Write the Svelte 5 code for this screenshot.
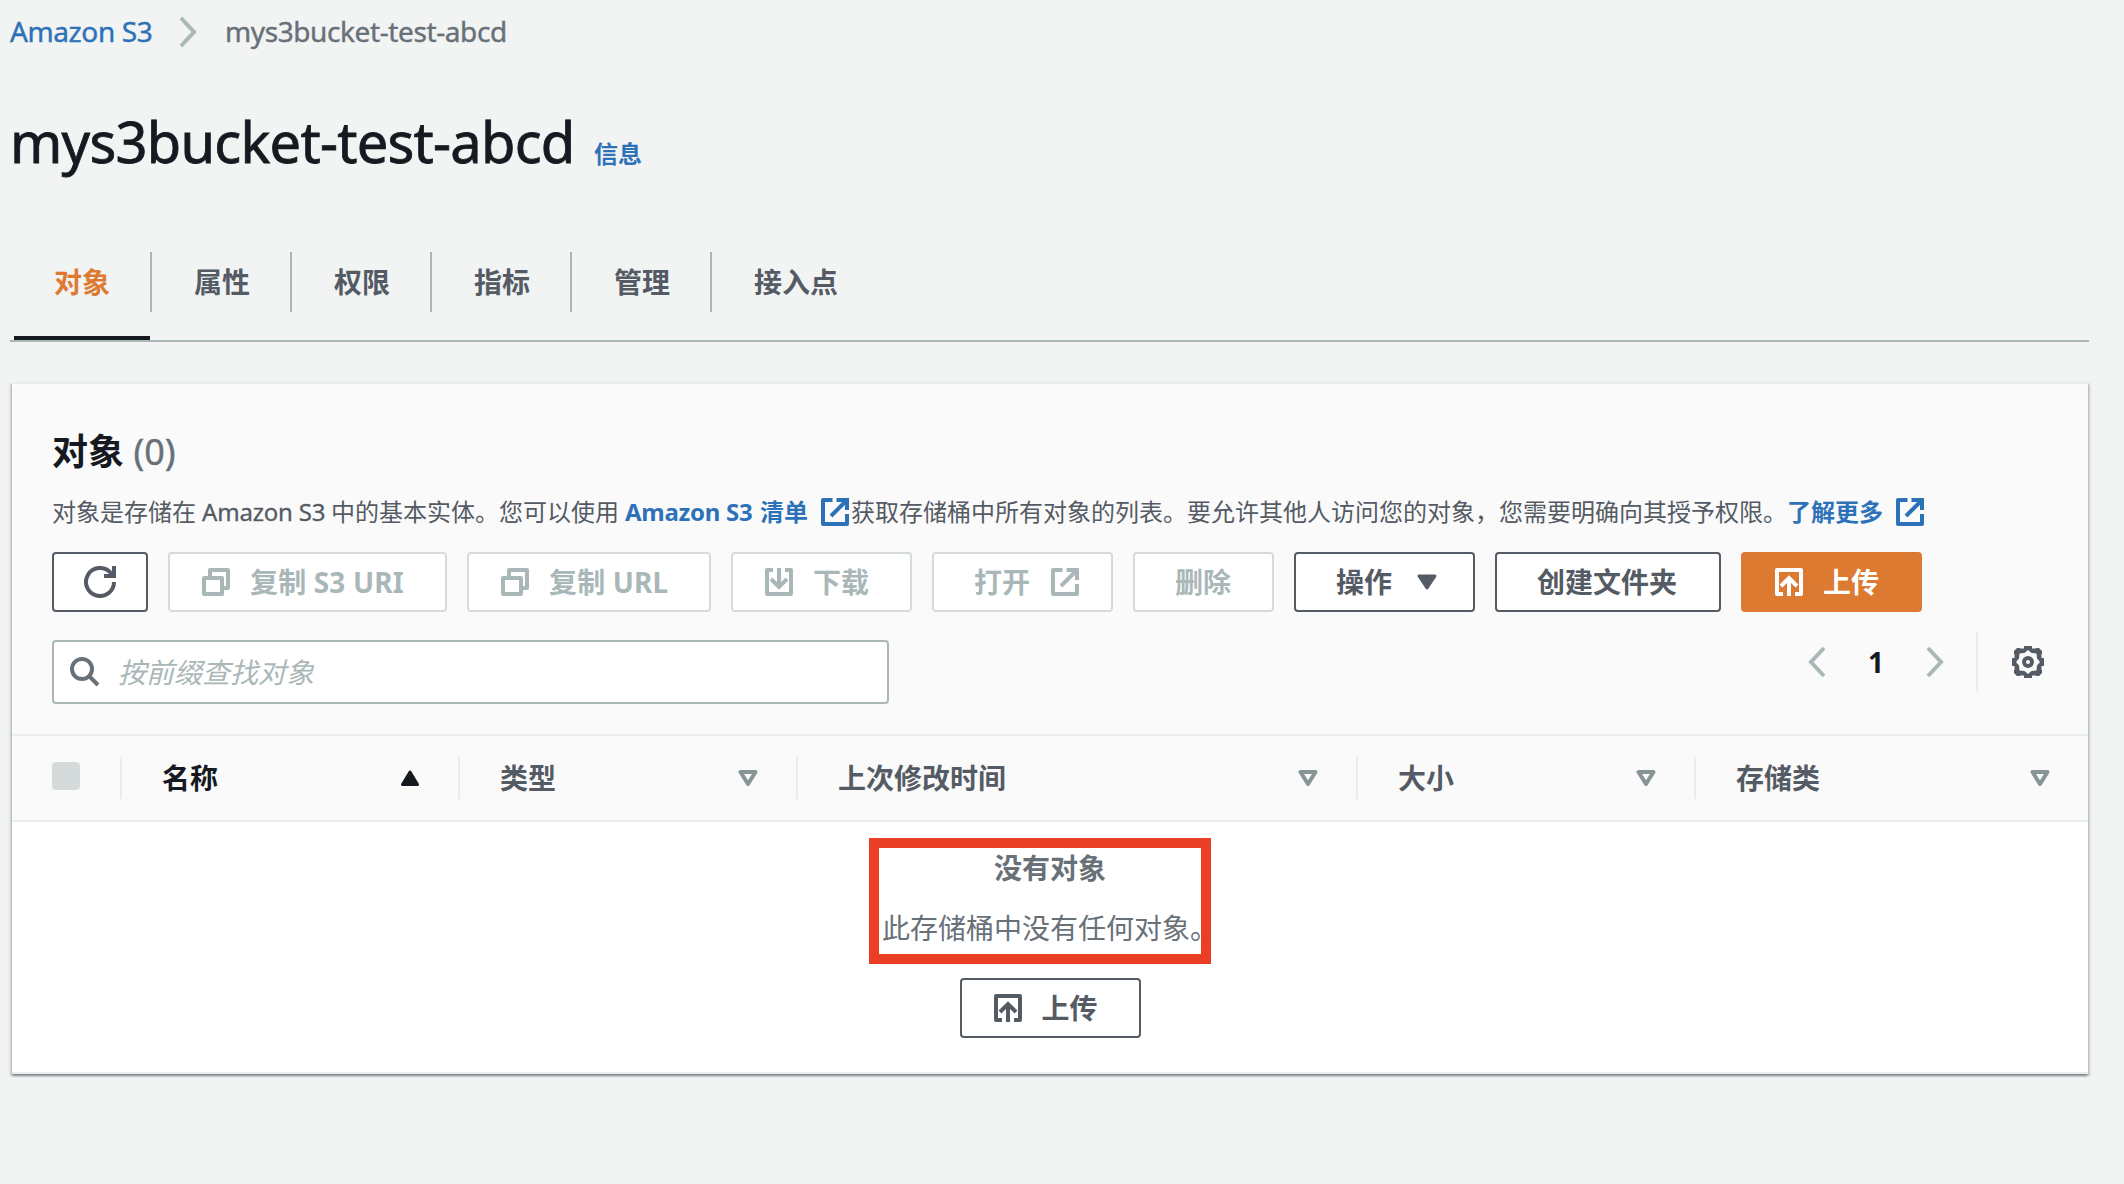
<script>
  const tabs = ['对象', '属性', '权限', '指标', '管理', '接入点'];
  const columns = [
    { label: '名称', cls: 'c1', sorted: true },
    { label: '类型', cls: 'c2' },
    { label: '上次修改时间', cls: 'c3' },
    { label: '大小', cls: 'c4' },
    { label: '存储类', cls: 'c5' }
  ];
</script>

{#snippet icon(name)}
  <svg class="icon" viewBox="0 0 28 28" fill="none" stroke="currentColor" stroke-width="4" stroke-linejoin="round">
    {#if name === 'copy'}
      <path d="M2 10h18v16H2z" />
      <path d="M8 9V2h18v18h-5" />
    {:else if name === 'download'}
      <path d="M8 2H2v24h24V2h-6" />
      <path d="M14 0v18M6 11l8 8 8-8" stroke-linejoin="miter" />
    {:else if name === 'upload'}
      <path d="M8 26H2V2h24v24h-6" />
      <path d="M14 28V10M6 18l8-8 8 8" stroke-linejoin="miter" />
    {:else if name === 'external'}
      <path d="M11.500 2H2v24h24V16" />
      <path d="M10 18L25 3M15.500 2H26v10" stroke-linejoin="miter" />
    {/if}
  </svg>
{/snippet}

<div class="page">
  <nav class="crumbs">
    <a class="root" href="#s3">Amazon S3</a>
    <svg class="chev" viewBox="0 0 20 32" fill="none" stroke="#aab7b8" stroke-width="4"><path d="M2 2l13 14L2 30" /></svg>
    <span class="leaf">mys3bucket-test-abcd</span>
  </nav>

  <header class="title">
    <h1>mys3bucket-test-abcd</h1>
    <a href="#info">信息</a>
  </header>

  <div class="tabs">
    {#each tabs as tab, i}
      <div class="tab" class:active={i === 0}><span>{tab}</span></div>
    {/each}
  </div>

  <section class="panel">
    <div class="head">
      <h2>对象 <span>(0)</span></h2>
      <p class="desc">
        <span>对象是存储在</span><span class="lat">Amazon S3</span><span>中的基本实体。您可以使用</span><a href="#inv"><span class="latb">Amazon S3</span><span>清单</span>{@render icon('external')}</a><span class="more">获取存储桶中所有对象的列表。要允许其他人访问您的对象，您需要明确向其授予权限。</span><a href="#more"><span>了解更多</span>{@render icon('external')}</a>
      </p>

      <div class="actions">
        <button class="w96" aria-label="refresh">
          <svg class="refresh" viewBox="0 0 32 32" fill="none" stroke="currentColor" stroke-width="4">
            <path d="M30 16A14 14 0 1 1 26 6.2L29 10" />
            <path d="M30 0v10H20" />
          </svg>
        </button>
        <button class="w279" disabled>{@render icon('copy')}<span class="wide">复制 S3 URI</span></button>
        <button class="w244" disabled>{@render icon('copy')}<span class="wide">复制 URL</span></button>
        <button class="w181" disabled>{@render icon('download')}<span>下载</span></button>
        <button class="w181 end" disabled><span>打开</span>{@render icon('external')}</button>
        <button class="w141" disabled><span>删除</span></button>
        <button class="w181 ops"><span>操作</span>
          <svg class="tri" viewBox="0 0 20 16"><path d="M2 2h16l-8 12z" fill="currentColor" stroke="currentColor" stroke-width="3" stroke-linejoin="round" /></svg>
        </button>
        <button class="w226"><span>创建文件夹</span></button>
        <button class="w181 primary">{@render icon('upload')}<span>上传</span></button>
      </div>

      <div class="tools">
        <div class="search">
          <svg viewBox="0 0 30 30" fill="none" stroke="#687078" stroke-width="4"><circle cx="12" cy="12" r="10" /><path d="M19 19l9 9" /></svg>
          <em>按前缀查找对象</em>
        </div>
        <div class="pager">
          <svg class="chev" viewBox="0 0 20 32" fill="none" stroke="#aab7b8" stroke-width="4"><path d="M18 2L5 16l13 14" /></svg>
          <b>1</b>
          <svg class="chev" viewBox="0 0 20 32" fill="none" stroke="#aab7b8" stroke-width="4"><path d="M2 2l13 14L2 30" /></svg>
          <i></i>
          <svg class="gear" viewBox="-16 -16 32 32" fill="#545b64" fill-rule="evenodd">
            <path d="M-4-16H4V-13.500H8V-14H11L14-11V-8H13.500V-4H16V4H13.500V8H14V11L11 14H8V13.500H4V16H-4V13.500H-8V14H-11L-14 11V8H-13.500V4H-16V-4H-13.500V-8H-14V-11L-11-14H-8V-13.500H-4Z M0-12L-3.500-9L-8.500-8.500L-9-3.500L-12 0L-9 3.500L-8.500 8.500L-3.500 9L0 12L3.500 9L8.500 8.500L9 3.500L12 0L9-3.500L8.500-8.500L3.500-9Z" />
            <circle r="4" fill="none" stroke="#545b64" stroke-width="4" />
          </svg>
        </div>
      </div>
    </div>

    <div class="thead">
      <div class="check"><span></span></div>
      {#each columns as col}
        <div class="th {col.cls}" class:sorted={col.sorted}>
          <span>{col.label}</span>
          <svg class="tri" viewBox="0 0 20 16">
            {#if col.sorted}
              <path d="M2.5 14.5h15L10 2z" fill="#16191f" stroke="#16191f" stroke-width="3" stroke-linejoin="round" />
            {:else}
              <path d="M2.5 2h15L10 14z" fill="none" stroke="#879596" stroke-width="4" stroke-linejoin="round" />
            {/if}
          </svg>
        </div>
      {/each}
    </div>

    <div class="empty">
      <strong>没有对象</strong>
      <p>此存储桶中没有任何对象。</p>
      <button class="w181">{@render icon('upload')}<span>上传</span></button>
      <div class="mark"></div>
    </div>
  </section>
</div>

<style>
  :global(body) { background: #f2f3f3; }
  * { box-sizing: border-box; }
  .page {
    width: 2124px; height: 1184px; overflow: hidden; padding-left: 10px;
    background: #f2f3f3; color: #545b64;
    font: 28px/40px "Noto Sans", "Noto Sans CJK SC", sans-serif;
  }
  h1, h2, p { margin: 0; font-weight: 400; }
  a { color: #2d72b8; text-decoration: none; }
  svg { display: block; flex: none; }
  .icon { width: 28px; height: 28px; }
  .chev { width: 20px; height: 32px; }

  .crumbs { display: flex; align-items: center; height: 64px; color: #687078; -webkit-text-stroke: 0.4px; }
  .crumbs a, .crumbs span { padding-bottom: 2px; }
  .root { width: 142px; white-space: nowrap; letter-spacing: -0.4px; }
  .crumbs .chev { margin: 0 26px 0 27px; }
  .leaf { letter-spacing: -0.4px; }

  .title { display: flex; align-items: baseline; height: 188px; padding-top: 42px; }
  h1 { width: 584px; font-size: 56px; line-height: 70px; color: #16191f; letter-spacing: -0.75px; white-space: nowrap; -webkit-text-stroke: 0.8px; }
  .title a { font-size: 24px; font-weight: 700; }

  .tabs { display: flex; width: 2079px; height: 90px; border-bottom: 2px solid #aab7b8; font-weight: 700; }
  .tab { width: 140px; height: 60px; display: flex; align-items: center; padding-left: 42px; border-left: 2px solid #aab7b8; white-space: nowrap; }
  .tab:last-child { width: 168px; }
  .tab.active { width: 136px; height: 88px; margin: 0 0 0 4px; padding: 0 0 24px 40px; border-left: 0; border-bottom: 4px solid #16191f; color: #dd7a32; }

  .panel {
    width: 2076px; height: 692px; margin: 40px 0 0 2px; border-top: 2px solid #eaeded; border-bottom: 2px solid #eaeded; background: #fff;
    box-shadow: 0 2px 2px rgba(0,28,36,.3), 2px 2px 2px rgba(0,28,36,.15), -2px 2px 2px rgba(0,28,36,.15);
  }
  .head { height: 350px; padding: 44px 40px 0; background: #fafafa; }
  h2 { height: 48px; font-size: 36px; line-height: 48px; font-weight: 700; color: #16191f; white-space: nowrap; }
  h2 span { font-weight: 400; color: #687078; -webkit-text-stroke: 0.4px; }
  .desc { display: flex; align-items: center; height: 36px; margin-top: 18px; font-size: 24px; line-height: 36px; white-space: nowrap; }
  .desc a { display: flex; align-items: center; font-weight: 700; }
  .desc .icon { margin-left: 13px; }
  .lat { width: 135px; padding-left: 6px; letter-spacing: -0.2px; -webkit-text-stroke: 0.3px; }
  .latb { width: 141px; padding-left: 6px; letter-spacing: -0.3px; }
  .more { margin-left: 2px; }

  .actions { display: flex; gap: 20px; margin-top: 22px; }
  button {
    display: flex; align-items: center; height: 60px; padding: 0 0 0 32px; gap: 20px;
    background: #fff; border: 2px solid #545b64; border-radius: 4px; color: #545b64;
    font: 700 28px/40px "Noto Sans", "Noto Sans CJK SC", sans-serif; white-space: nowrap;
  }
  button:disabled { border-color: #d5dbdb; color: #aab7b8; }
  .w96 { width: 96px; }
  .refresh { width: 32px; height: 32px; margin-left: -2px; }
  .w279 { width: 279px; }
  .w244 { width: 244px; }
  .w181 { width: 181px; }
  .w141 { width: 141px; padding-left: 40px; }
  .w226 { width: 226px; padding-left: 40px; }
  .wide { letter-spacing: 0.15px; }
  .end { padding-left: 40px; gap: 21px; }
  .ops { padding-left: 40px; gap: 25px; }
  .primary { background: #dd7a32; border-color: #dd7a32; color: #fff; }
  .tri { width: 20px; height: 16px; }

  .tools { display: flex; justify-content: space-between; height: 64px; margin-top: 28px; }
  .search { display: flex; align-items: center; width: 837px; height: 64px; padding-left: 16px; gap: 18px; background: #fff; border: 2px solid #aab7b8; border-radius: 4px; }
  .search svg { width: 30px; height: 30px; }
  .search em { color: #aab7b8; }
  .pager { display: flex; align-items: center; height: 60px; margin-top: -8px; }
  .pager b { width: 100px; text-align: center; color: #16191f; }
  .pager i { width: 2px; height: 60px; margin: 0 34px 0 30px; background: #eaeded; }
  .gear { width: 32px; height: 32px; margin-right: 4px; }

  .thead { display: flex; align-items: center; height: 88px; border-top: 2px solid #eaeded; border-bottom: 2px solid #eaeded; background: #fafafa; font-weight: 700; }
  .check { width: 108px; padding-left: 40px; }
  .check span { display: block; width: 28px; height: 28px; margin-bottom: 4px; border-radius: 4px; background: #d5dbdb; }
  .th { display: flex; align-items: center; justify-content: space-between; height: 42px; padding: 0 38px 0 40px; border-left: 2px solid #eaeded; }
  .sorted { color: #16191f; }
  .c1, .c2, .c4 { width: 338px; }
  .c3 { width: 560px; }
  .c5 { width: 394px; padding-left: 40px; }

  .empty { position: relative; display: flex; flex-direction: column; align-items: center; height: 250px; padding-top: 26px; color: #687078; }
  .empty p { margin: 20px 0 30px; }
  .mark { position: absolute; left: 857px; top: 16px; width: 342px; height: 126px; border: 10px solid #eb3f25; }
</style>
